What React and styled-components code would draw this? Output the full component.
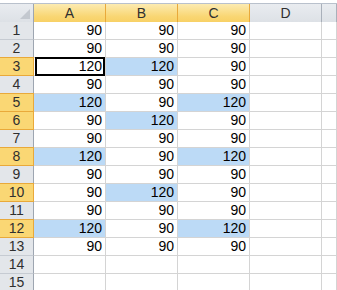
import styled, { createGlobalStyle, css } from "styled-components";

const GlobalStyle = createGlobalStyle`
  html, body {
    margin: 0;
    padding: 0;
    background: #ffffff;
  }
  body {
    font-family: "Liberation Sans", Arial, sans-serif;
  }
`;

const Sheet = styled.div`
  width: 337px;
  height: 290px;
  overflow: hidden;
  background: #ffffff;
  padding-top: 3px;
  box-sizing: border-box;
`;

const Grid = styled.div`
  display: grid;
  grid-template-columns: 34px repeat(4, 72px) 1fr;
  grid-auto-rows: 18px;
  border-top: 1px solid #b9c1cc;
  font-size: 14px;
`;

const Corner = styled.div`
  height: 19px;
  box-sizing: border-box;
  background: linear-gradient(#e9ecf0, #dde1e6);
  border-right: 1px solid #9ea6b1;
  border-bottom: 1px solid #9ea6b1;
  display: flex;
  align-items: flex-end;
  justify-content: flex-end;
  padding: 0 3px 3px 0;
`;

const ColHead = styled.div`
  height: 19px;
  box-sizing: border-box;
  display: flex;
  align-items: center;
  justify-content: center;
  color: #2f2f2f;
  line-height: 18px;
  background: linear-gradient(#e9ecf0, #dde1e6);
  border-right: 1px solid #a9b0ba;
  border-bottom: 1px solid #9ea6b1;
  ${(p) =>
    p.$on &&
    css`
      background: linear-gradient(#fcebb1, #f9d673 70%, #f8d166);
      border-right-color: #e9a93a;
      border-bottom-color: #e9a93a;
    `}
`;

const RowHead = styled.div`
  box-sizing: border-box;
  display: flex;
  align-items: center;
  justify-content: center;
  color: #2f2f2f;
  line-height: 17px;
  background: #e3e6ea;
  border-right: 1px solid #9ea6b1;
  border-bottom: 1px solid #c6cbd2;
  ${(p) =>
    p.$on &&
    css`
      background: #fad774;
      border-right-color: #e9a93a;
      border-bottom-color: #e9a93a;
      box-shadow: 0 -1px 0 #e9a93a;
    `}
`;

const Cell = styled.div`
  position: relative;
  box-sizing: border-box;
  text-align: right;
  padding-right: 3px;
  line-height: 17px;
  color: #000000;
  border-right: 1px solid #d4d4d4;
  border-bottom: 1px solid #d4d4d4;
  background: ${(p) => (p.$hi ? "#bcdaf6" : "#ffffff")};
`;

const Active = styled.div`
  position: absolute;
  left: 1px;
  top: -1px;
  right: 0;
  bottom: -1px;
  border: 2px solid #000000;
  box-sizing: border-box;
`;

const cols = ["A", "B", "C", "D", ""];
const rows = [
  ["90", "90", "90"],
  ["90", "90", "90"],
  ["120", "120", "90"],
  ["90", "90", "90"],
  ["120", "90", "120"],
  ["90", "120", "90"],
  ["90", "90", "90"],
  ["120", "90", "120"],
  ["90", "90", "90"],
  ["90", "120", "90"],
  ["90", "90", "90"],
  ["120", "90", "120"],
  ["90", "90", "90"],
  [],
  [],
];

const App = () => {
  return (
    <Sheet>
      <GlobalStyle />
      <Grid>
        <Corner>
          <svg width="10" height="10" viewBox="0 0 10 10">
            <polygon points="10,0 10,10 0,10" fill="#c3c8cf" />
          </svg>
        </Corner>
        {cols.map((c, i) => (
          <ColHead key={i} $on={i < 3}>
            {c}
          </ColHead>
        ))}
        {rows.map((r, ri) => {
          const sel = r.includes("120");
          return [
            <RowHead key={`h${ri}`} $on={sel}>
              {ri + 1}
            </RowHead>,
            ...cols.map((_, ci) => {
              const v = r[ci] || "";
              const active = ri === 2 && ci === 0;
              return (
                <Cell key={`${ri}-${ci}`} $hi={v === "120" && !active}>
                  {v}
                  {active && <Active />}
                </Cell>
              );
            }),
          ];
        })}
      </Grid>
    </Sheet>
  );
};

export default App;
